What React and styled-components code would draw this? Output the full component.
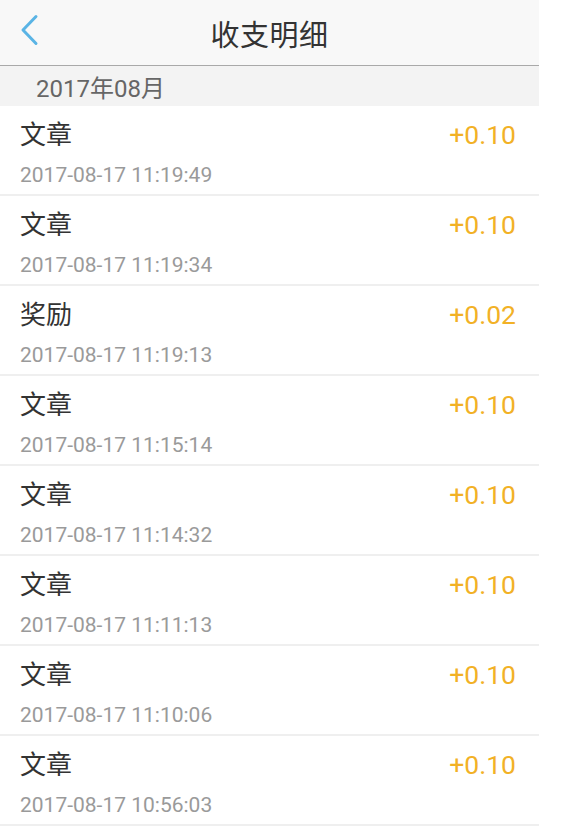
import React from "react";
import styled, { createGlobalStyle } from "styled-components";

const GlobalStyle = createGlobalStyle`
    body {
        margin: 0;
        background: #fff;
        font-family: Roboto, "Noto Sans CJK SC", sans-serif;
    }
`;

const Page = styled.div`
    width: 539px;
    background: #fff;
`;

const Header = styled.header`
    height: 65px;
    background: #f8f8f8;
    border-bottom: 1px solid #a9a9a9;
    display: flex;
    align-items: center;
    justify-content: center;
    position: relative;
`;

const Back = styled.div`
    position: absolute;
    left: 19px;
    top: 14px;
    width: 22px;
    height: 32px;
    display: flex;
`;

const Title = styled.h1`
    margin: 0;
    font-size: 29px;
    font-weight: 400;
    color: #333;
    letter-spacing: 0.5px;
`;

const Section = styled.div`
    height: 40px;
    background: #f3f3f3;
    display: flex;
    align-items: center;
    padding-left: 36px;
    font-size: 24px;
    color: #666;
`;

const Row = styled.div`
    height: 90px;
    border-bottom: 2px solid #efefef;
    display: flex;
    justify-content: space-between;
    padding: 14px 23px 0 20px;
    box-sizing: border-box;
`;

const Info = styled.div`
    display: flex;
    flex-direction: column;
`;

const Name = styled.div`
    font-size: 26px;
    line-height: 30px;
    color: #333;
`;

const Time = styled.div`
    margin-top: 13px;
    font-size: 21px;
    line-height: 24px;
    color: #9a9a9a;
`;

const Amount = styled.div`
    font-size: 26.5px;
    line-height: 30px;
    color: ${props => props.color || "#f2b126"};
`;

const records = [
    { name: "文章", time: "2017-08-17 11:19:49", amount: "+0.10" },
    { name: "文章", time: "2017-08-17 11:19:34", amount: "+0.10" },
    { name: "奖励", time: "2017-08-17 11:19:13", amount: "+0.02" },
    { name: "文章", time: "2017-08-17 11:15:14", amount: "+0.10" },
    { name: "文章", time: "2017-08-17 11:14:32", amount: "+0.10" },
    { name: "文章", time: "2017-08-17 11:11:13", amount: "+0.10" },
    { name: "文章", time: "2017-08-17 11:10:06", amount: "+0.10" },
    { name: "文章", time: "2017-08-17 10:56:03", amount: "+0.10" }
];

const App = () => (
    <>
        <GlobalStyle />
        <Page>
            <Header>
                <Back>
                    <svg width="22" height="32" viewBox="0 0 22 32">
                        <polyline
                            points="17,2.5 4,16 17,29.5"
                            fill="none"
                            stroke="#5ab4e5"
                            strokeWidth="3"
                            strokeLinecap="round"
                            strokeLinejoin="round"
                        />
                    </svg>
                </Back>
                <Title>收支明细</Title>
            </Header>
            <Section>2017年08月</Section>
            {records.map((r, i) => (
                <Row key={i}>
                    <Info>
                        <Name>{r.name}</Name>
                        <Time>{r.time}</Time>
                    </Info>
                    <Amount>{r.amount}</Amount>
                </Row>
            ))}
        </Page>
    </>
);

export default App;
